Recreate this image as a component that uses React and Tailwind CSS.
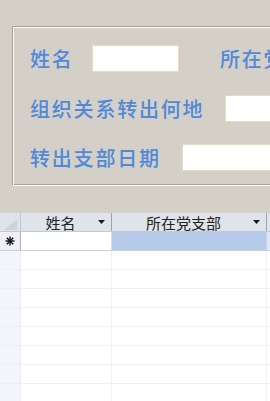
import React from "react";

const label = "text-[20px] leading-none tracking-[1.8px] text-[#5088da] font-medium whitespace-nowrap shrink-0";
const box = "h-[27px] bg-white border border-[#e4dcbc] shrink-0";

function Arrow() {
  return (
    <svg width="7" height="4" viewBox="0 0 7 4" className="shrink-0">
      <polygon points="0,0 7,0 3.5,4" fill="#1a1a1a" />
    </svg>
  );
}

function Star() {
  return (
    <svg width="10" height="10" viewBox="0 0 10 10">
      <g stroke="#111" strokeWidth="1.4">
        <line x1="5" y1="0.5" x2="5" y2="9.5" />
        <line x1="0.5" y1="5" x2="9.5" y2="5" />
        <line x1="1.8" y1="1.8" x2="8.2" y2="8.2" />
        <line x1="8.2" y1="1.8" x2="1.8" y2="8.2" />
      </g>
    </svg>
  );
}

function Corner() {
  return (
    <svg width="13" height="11" viewBox="0 0 13 11">
      <polygon points="0,11 13,0 13,11" fill="#cfd3da" />
    </svg>
  );
}

export default function App() {
  const rows = Array.from({ length: 8 });
  return (
    <div
      className="w-[270px] h-[401px] overflow-hidden bg-[#d4d0c8] flex flex-col"
      style={{ fontFamily: '"Noto Sans CJK SC", "Noto Sans", sans-serif' }}
    >
      {/* Form panel */}
      <div className="ml-[12px] mt-[26px] w-[300px] h-[160px] shrink-0 border-t border-l border-b border-t-[#a3a197] border-l-[#a3a197] border-b-white shadow-[inset_1px_1px_0_#ffffff,inset_0_-1px_0_#a3a197] flex flex-col pl-[17px] pt-[18px]">
        <div className="flex items-center h-[27px]">
          <span className={label + " w-[62px]"}>姓名</span>
          <div className={box + " w-[87px]"} />
          <span className={label + " ml-[41px]"}>所在党支部</span>
        </div>
        <div className="flex items-center h-[27px] mt-[23px]">
          <span className={label + " w-[195px]"}>组织关系转出何地</span>
          <div className={box + " w-[120px]"} />
        </div>
        <div className="flex items-center h-[27px] mt-[22px]">
          <span className={label + " w-[152px]"}>转出支部日期</span>
          <div className={box + " w-[120px]"} />
        </div>
      </div>

      {/* Datasheet */}
      <div className="mt-[27px] flex flex-col bg-white text-[15px] text-[#222]">
        {/* header */}
        <div className="flex h-[19px] bg-[#dfe3ea] border-b border-[#c3cad6]">
          <div className="w-[21px] shrink-0 border-r border-[#c3cad6] flex items-end justify-center pb-[1px]">
            <Corner />
          </div>
          <div className="w-[91px] shrink-0 border-r border-[#9aa3b3] flex items-center pr-[6px]">
            <span className="flex-1 text-center leading-none pl-[2px]">姓名</span>
            <Arrow />
          </div>
          <div className="w-[155px] shrink-0 border-r border-[#9aa3b3] flex items-center pr-[6px]">
            <span className="flex-1 text-center leading-none pl-[2px]">所在党支部</span>
            <Arrow />
          </div>
          <div className="flex-1" />
        </div>
        {/* new record row */}
        <div className="flex h-[19px] border-b border-[#c7d0de]">
          <div className="w-[21px] shrink-0 bg-[#eef0f6] border-r border-[#a9b0bd] flex items-center justify-center">
            <Star />
          </div>
          <div className="w-[91px] shrink-0 bg-white border-r border-[#d8dde6]" />
          <div className="w-[155px] shrink-0 bg-[#b6caea] border-r border-[#c9d0dc]" />
          <div className="flex-1 bg-[#dfe6f3]" />
        </div>
        {rows.map((_, i) => (
          <div key={i} className="flex h-[19px] border-b border-[#eef0f4]">
            <div className="w-[21px] shrink-0 bg-[#f4f5fa] border-r border-[#e8ebf1]" />
            <div className="w-[91px] shrink-0 border-r border-[#eef0f4]" />
            <div className="w-[155px] shrink-0 border-r border-[#eef0f4]" />
            <div className="flex-1" />
          </div>
        ))}
      </div>
    </div>
  );
}
